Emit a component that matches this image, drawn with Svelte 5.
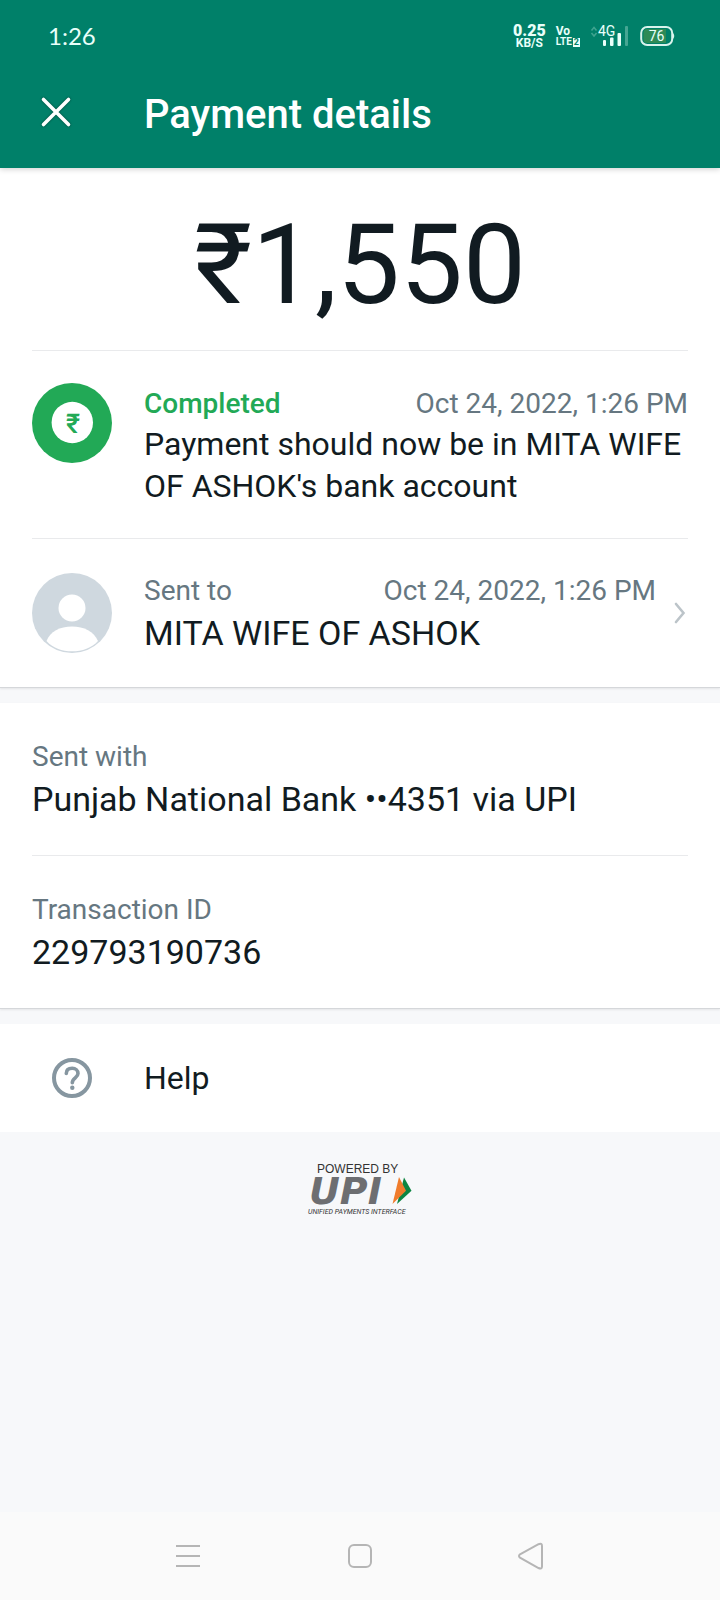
<script>
  const amount = '₹1,550';
  const time = 'Oct 24, 2022, 1:26 PM';
  const details = [
    { label: 'Sent with', value: 'Punjab National Bank ••4351 via UPI' },
    { label: 'Transaction ID', value: '229793190736' }
  ];
</script>

<div class="page">
  <header>
    <div class="status">
      <span class="clock">1:26</span>
      <div class="indicators">
        <div class="speed"><b>0.25</b><span>KB/S</span></div>
        <div class="volte">
          <span>Vo</span>
          <div class="lte"><span>LTE</span><i>2</i></div>
        </div>
        <svg class="signal" width="40" height="24" viewBox="0 0 40 24" aria-hidden="true">
          <g fill="none" stroke="#3fa390" stroke-width="1.5">
            <path d="M1.500 6.500L4 3.500L6.500 6.500M1.500 9L4 12L6.500 9" />
          </g>
          <text x="8" y="12" font-size="14">4G</text>
          <g fill="#e9fffa">
            <rect x="13" y="16" width="3" height="6" rx="1" />
            <rect x="20" y="13.500" width="3.500" height="8.500" rx="1" />
            <rect x="27.500" y="9" width="3.500" height="13" rx="1" />
          </g>
          <rect x="35" y="2" width="3" height="20" rx="1" fill="#45a693" />
        </svg>
        <svg class="battery" width="36" height="22" viewBox="0 0 36 22" aria-hidden="true">
          <rect x="1.200" y="2" width="31" height="18" rx="6" fill="none" stroke="#d8f3ec" stroke-width="2" />
          <path d="M7 4H26V18H7Q3.500 18 3.500 14V8Q3.500 4 7 4Z" fill="#2d8a56" />
          <path d="M33 8Q35.500 11 33 14Z" fill="#d8f3ec" />
          <text x="16.500" y="16" font-size="14" text-anchor="middle">76</text>
        </svg>
      </div>
    </div>
    <div class="appbar">
      <button class="close" aria-label="Close">
        <svg width="32" height="32" viewBox="0 0 32 32">
          <path d="M3.500 3.500L28.500 28.500M28.500 3.500L3.500 28.500" stroke="#fff" stroke-width="3.600" stroke-linecap="round" />
        </svg>
      </button>
      <h1>Payment details</h1>
    </div>
  </header>

  <main>
    <section class="card">
      <p class="amount">{amount}</p>

      <div class="row status-row">
        <svg class="avatar" width="80" height="80" viewBox="0 0 80 80" aria-hidden="true">
          <circle cx="40" cy="40" r="40" fill="#22a956" />
          <circle cx="40.300" cy="39.500" r="20.700" fill="#fff" />
          <text class="rupee" x="41" y="49.500" font-size="27" text-anchor="middle">₹</text>
        </svg>
        <div class="text">
          <div class="meta"><span class="done">Completed</span><time>{time}</time></div>
          <p class="message">Payment should now be in MITA WIFE OF ASHOK's bank account</p>
        </div>
      </div>

      <button class="row person">
        <svg class="avatar" width="80" height="80" viewBox="0 0 80 80" aria-hidden="true">
          <circle cx="40" cy="40" r="40" fill="#cfd8df" />
          <circle cx="40" cy="35" r="13.500" fill="#fff" />
          <path d="M14.500 68C18 58.500 28 53.500 40 53.500S62 58.500 66 68C60 75 50 78.300 40 78.300S20.500 75 14.500 68Z" fill="#fff" />
        </svg>
        <span class="text">
          <span class="meta"><span>Sent to</span><time>{time}</time></span>
          <span class="value">MITA WIFE OF ASHOK</span>
        </span>
        <svg class="chevron" width="16" height="24" viewBox="0 0 16 24" aria-hidden="true">
          <path d="M4 3L11.500 12L4 21" fill="none" stroke="#bcc4c9" stroke-width="2.600" stroke-linecap="round" />
        </svg>
      </button>
    </section>

    <section class="card">
      {#each details as item}
        <div class="detail">
          <span class="label">{item.label}</span>
          <span class="value">{item.value}</span>
        </div>
      {/each}
    </section>

    <button class="help">
      <svg width="40" height="40" viewBox="0 0 40 40" fill="none" stroke="#8696a0" aria-hidden="true">
        <circle cx="20" cy="20" r="18" stroke-width="4" />
        <path d="M14.300 15.500C14.300 12 16.800 10.300 20.200 10.300S26 12.500 26 15.500C26 19.800 20.300 20 20.300 24.800" stroke-width="3.600" stroke-linecap="round" />
        <circle cx="20.300" cy="29.800" r="2.200" fill="#8696a0" stroke="none" />
      </svg>
      <span>Help</span>
    </button>

    <footer>
      <svg width="108" height="56" viewBox="0 0 108 56" role="img" aria-label="Powered by UPI">
        <text class="powered" x="11" y="13">POWERED BY</text>
        <text class="upi" x="3" y="44">UPI</text>
        <path d="M98 17.500L105.500 30.700L91 44Z" fill="#0c8542" />
        <path d="M93 17L100 30.700L86.500 44Z" fill="#f07c2c" />
        <text class="unified" x="2" y="54">UNIFIED PAYMENTS INTERFACE</text>
      </svg>
    </footer>
  </main>

  <nav>
    <button aria-label="Recent apps">
      <svg width="24" height="26" viewBox="0 0 24 26" fill="none" stroke="#b5b5b5" stroke-width="2">
        <path d="M0 3H24M0 13H24M0 23H24" />
      </svg>
    </button>
    <button aria-label="Home">
      <svg width="24" height="26" viewBox="0 0 24 26" fill="none" stroke="#b5b5b5" stroke-width="2">
        <rect x="1" y="2" width="22" height="22" rx="5" />
      </svg>
    </button>
    <button aria-label="Back">
      <svg width="24" height="26" viewBox="2 0 24 26" fill="none" stroke="#b5b5b5" stroke-width="2">
        <path d="M2 11.300L20.500 1.200Q24 -0.200 24 3V23.500Q24 26.500 20.500 25L2 14.700Q0 13 2 11.300Z" />
      </svg>
    </button>
  </nav>
</div>

<style>
  :global(body) {
    margin: 0;
  }
  .page {
    min-height: 100vh;
    display: flex;
    flex-direction: column;
    background: #f7f8fa;
    color: #111b21;
    font-family: Roboto, sans-serif;
  }
  button {
    border: 0;
    padding: 0;
    margin: 0;
    background: none;
    color: inherit;
    font: inherit;
    text-align: left;
    cursor: pointer;
  }
  svg {
    display: block;
    flex: none;
    overflow: visible;
  }
  p,
  h1 {
    margin: 0;
  }
  header {
    position: relative;
    background: #008069;
    color: #fff;
    box-shadow: 0 1px 6px rgba(0, 0, 0, 0.2);
  }
  .status {
    display: flex;
    align-items: center;
    justify-content: space-between;
    height: 40px;
    padding: 16px 44px 0 48px;
    color: #e9fffa;
  }
  .clock {
    font-family: Lato, sans-serif;
    font-size: 24px;
    line-height: 28px;
  }
  .indicators {
    display: flex;
    align-items: center;
    gap: 10px;
  }
  .indicators text {
    fill: #e9fffa;
  }
  .speed {
    display: flex;
    flex-direction: column;
    align-items: center;
    font-weight: 700;
  }
  .speed b {
    font-size: 16px;
    line-height: 13px;
  }
  .speed span {
    font-size: 12px;
    line-height: 12px;
  }
  .volte {
    font-size: 12px;
    line-height: 12px;
    font-weight: 700;
  }
  .volte > span {
    display: block;
  }
  .lte {
    display: flex;
    align-items: center;
    gap: 1px;
    font-size: 10px;
    line-height: 10px;
  }
  .lte i {
    padding: 0 1px;
    background: #e9fffa;
    color: #008069;
    font-size: 9px;
    line-height: 9px;
    font-style: normal;
  }
  .battery text {
    font-weight: 400;
  }
  .appbar {
    display: flex;
    align-items: center;
    height: 112px;
    padding: 0 40px;
    gap: 72px;
  }
  .close svg {
    filter: drop-shadow(0 0 1px rgba(0, 0, 0, 0.5));
  }
  h1 {
    padding-top: 6px;
    font-size: 40px;
    line-height: 48px;
    font-weight: 500;
  }
  main {
    flex: 1;
  }
  .card {
    background: #fff;
    margin-bottom: 15px;
    padding: 0 32px;
    border-bottom: 1px solid #d5d7da;
    box-shadow: 0 1px 2px rgba(0, 0, 0, 0.08);
  }
  .amount {
    padding: 31px 0 19px;
    font-size: 112px;
    line-height: 132px;
    text-align: center;
  }
  .row {
    display: flex;
    gap: 32px;
    width: 100%;
    border-top: 1px solid #e9eaec;
  }
  .status-row {
    padding: 32px 0 31px;
  }
  .status-row .text {
    padding-top: 4px;
    gap: 2px;
  }
  .person {
    align-items: center;
    padding: 33px 0;
  }
  .text {
    flex: 1;
    min-width: 0;
    display: flex;
    flex-direction: column;
    gap: 4px;
  }
  .meta {
    display: flex;
    justify-content: space-between;
    font-size: 28px;
    line-height: 34px;
    color: #667781;
  }
  .done {
    color: #22a956;
    font-weight: 500;
  }
  .rupee {
    fill: #22a956;
    font-weight: 500;
  }
  .message {
    font-size: 32px;
    line-height: 42px;
  }
  .value {
    font-size: 34px;
    line-height: 42px;
  }
  .person .text {
    padding-top: 2px;
  }
  .person .chevron {
    margin-left: -16px;
  }
  .detail {
    display: flex;
    flex-direction: column;
    gap: 4px;
    padding: 37px 0 35px;
  }
  .detail + .detail {
    border-top: 1px solid #e9eaec;
  }
  .label {
    font-size: 28px;
    line-height: 34px;
    color: #667781;
  }
  .help {
    display: flex;
    align-items: center;
    gap: 52px;
    width: 100%;
    height: 108px;
    padding: 0 52px;
    background: #fff;
    font-size: 32px;
    line-height: 42px;
  }
  footer {
    display: flex;
    justify-content: center;
    padding: 28px 0;
  }
  .powered {
    fill: #333;
    font-family: 'Liberation Sans', sans-serif;
    font-size: 12px;
  }
  .upi {
    fill: #6d6e71;
    font-family: 'DejaVu Sans', sans-serif;
    font-size: 38px;
    font-weight: 700;
    font-style: italic;
  }
  .unified {
    fill: #333;
    font-size: 7px;
    font-style: italic;
  }
  nav {
    display: flex;
    align-items: center;
    justify-content: space-between;
    height: 88px;
    padding: 0 176px;
    background: #fafafa;
  }
</style>
